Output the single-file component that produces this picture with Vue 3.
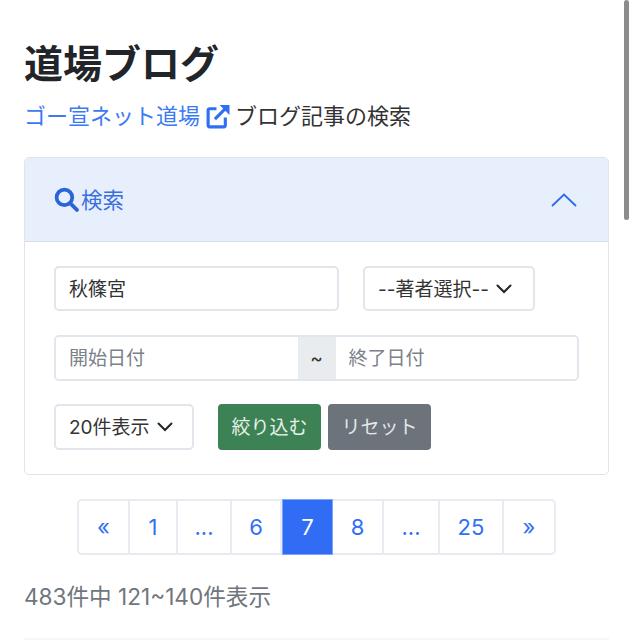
<script setup>
const pages = [
  { label: '«', w: 51 },
  { label: '1', w: 48 },
  { label: '...', w: 54 },
  { label: '6', w: 50 },
  { label: '7', w: 51, active: true },
  { label: '8', w: 51 },
  { label: '...', w: 56 },
  { label: '25', w: 64 },
  { label: '»', w: 50 }
]
</script>

<template>
  <div class="page">
    <h1 class="title">道場ブログ</h1>
    <p class="lead">
      <a class="link">ゴー宣ネット道場</a>
      <svg class="ext" viewBox="0 0 24 24" width="25" height="25" fill="none" stroke="#2f6ff2" stroke-width="3">
        <path d="M11 4.500H4.500A1.500 1.500 0 0 0 3 6v14.500A1.500 1.500 0 0 0 4.500 22H18a1.500 1.500 0 0 0 1.500-1.500V13" />
        <path d="M9.500 14.500 20 4" />
        <path d="M14 1h9.500v9.500z" fill="#2f6ff2" stroke="none" />
      </svg>
      <span>ブログ記事の検索</span>
    </p>

    <section class="card">
      <header class="card-head">
        <div class="head-left">
          <svg viewBox="0 0 24 24" width="25" height="25" fill="none" stroke="#2b63d9" stroke-width="3.600" stroke-linecap="round">
            <circle cx="10" cy="10" r="7.500" />
            <path d="M15.500 15.500 22 22" />
          </svg>
          <span class="head-text">検索</span>
        </div>
        <svg class="chev-up" viewBox="0 0 26 14" width="26" height="14" fill="none" stroke="#2f6ae6" stroke-width="1.800">
          <path d="M1 13 13 1.500 25 13" />
        </svg>
      </header>

      <div class="card-body">
        <div class="row">
          <input class="field name" value="秋篠宮" />
          <div class="field select author">
            <span class="label">--著者選択--</span>
            <svg viewBox="0 0 16 10" width="16" height="10" fill="none" stroke="#212529" stroke-width="2" stroke-linecap="round">
              <path d="M1.500 1.500 8 8l6.500-6.500" />
            </svg>
          </div>
        </div>

        <div class="dates">
          <input class="date" placeholder="開始日付" />
          <div class="addon">~</div>
          <input class="date" placeholder="終了日付" />
        </div>

        <div class="row actions">
          <div class="field select count">
            <span class="label">20件表示</span>
            <svg viewBox="0 0 16 10" width="16" height="10" fill="none" stroke="#212529" stroke-width="2" stroke-linecap="round">
              <path d="M1.500 1.500 8 8l6.500-6.500" />
            </svg>
          </div>
          <button class="btn green">絞り込む</button>
          <button class="btn gray">リセット</button>
        </div>
      </div>
    </section>

    <nav class="pager">
      <a
        v-for="(p, i) in pages"
        :key="i"
        class="cell"
        :class="{ active: p.active }"
        :style="{ width: p.w + 'px' }"
      >{{ p.label }}</a>
    </nav>

    <p class="summary">483件中 121~140件表示</p>
    <div class="rule"></div>
    <div class="scrollbar"></div>
  </div>
</template>

<style scoped>
.page {
  position: relative;
  box-sizing: border-box;
  width: 632px;
  height: 640px;
  overflow: hidden;
  padding: 41px 23px 0 24px;
  background: #fff;
  color: #212529;
  font-family: Inter, "Noto Sans CJK JP", sans-serif;
  font-size: 22px;
}
.title {
  margin: 0;
  font-size: 39px;
  line-height: 46px;
  font-weight: 700;
}
.lead {
  margin: 15px 0 0;
  height: 28px;
  display: flex;
  align-items: center;
  line-height: 28px;
  font-size: 22px;
  color: #333;
}
.link { color: #3b7af5; }
.ext { margin: 0 5px 0 5px; flex: none; }
.card {
  box-sizing: border-box;
  margin-top: 27px;
  height: 318px;
  border: 1.500px solid #dfe3ea;
  border-radius: 5px;
  overflow: hidden;
}
.card-head {
  box-sizing: border-box;
  height: 84px;
  background: #e7effd;
  border-bottom: 1.500px solid #d6ddea;
  display: flex;
  align-items: center;
  justify-content: space-between;
  padding: 0 31px 0 29px;
  color: #3a70dd;
}
.head-left {
  display: flex;
  align-items: center;
  gap: 2px;
}
.head-text {
  font-size: 21.500px;
  padding-bottom: 2px;
}
.card-body {
  padding: 24px 29px 0 29px;
  display: flex;
  flex-direction: column;
}
.row {
  display: flex;
  align-items: center;
  gap: 24px;
}
.field {
  box-sizing: border-box;
  height: 45px;
  padding: 0 13px 3px;
  border: 2px solid #e2e5ec;
  border-radius: 5px;
  background: #fff;
  color: #333;
  font: inherit;
  font-size: 19px;
  outline: none;
}
.name { width: 285px; }
.select {
  display: flex;
  align-items: center;
  gap: 7px;
}
.select svg { flex: none; margin-top: 3px; }
.label { white-space: nowrap; }
.author { width: 172px; }
.dates {
  box-sizing: border-box;
  display: flex;
  width: 525px;
  height: 46px;
  margin-top: 24px;
  border: 2px solid #e2e5ec;
  border-radius: 5px;
  overflow: hidden;
}
.date {
  box-sizing: border-box;
  flex: 1;
  min-width: 0;
  padding: 0 13px;
  border: 0;
  outline: none;
  font: inherit;
  font-size: 19px;
}
.date::placeholder { color: #7b8188; opacity: 1; }
.addon {
  width: 38px;
  flex: none;
  display: flex;
  align-items: center;
  justify-content: center;
  background: #e9ecef;
  font-size: 19px;
  color: #333;
}
.actions {
  margin-top: 23px;
  gap: 0;
}
.count {
  width: 140px;
  height: 46px;
  margin-right: 24px;
}
.btn {
  box-sizing: border-box;
  width: 103px;
  height: 46px;
  padding: 0 0 3px;
  border: 1px solid transparent;
  border-radius: 4px;
  color: #fff;
  font: inherit;
  font-size: 19px;
}
.green { background: #3d8254; color: #e6f2e9; margin-right: 7px; }
.gray { background: #6c737b; color: #e4e6e8; }
.pager {
  box-sizing: border-box;
  margin: 24px auto 0;
  display: flex;
  width: 479px;
  height: 56px;
  border: 2px solid #e8ebf1;
  border-radius: 5px;
}
.cell {
  box-sizing: border-box;
  flex: none;
  display: flex;
  align-items: center;
  justify-content: center;
  border-right: 2px solid #e8ebf1;
  color: #3270f2;
  font-size: 22px;
}
.cell:last-child { border-right: 0; }
.cell.active {
  margin: -2px 0;
  height: 56px;
  background: #316cf4;
  border: 1px solid #7ea6f8;
  color: #fff;
}
.summary {
  margin: 26px 0 0;
  line-height: 32px;
  font-size: 22.600px;
  color: #6f767d;
}
.rule {
  height: 2px;
  margin-top: 25px;
  background: #f5f6f7;
}
.scrollbar {
  position: absolute;
  top: 0;
  left: 624px;
  width: 5px;
  height: 220px;
  border-radius: 3px;
  background: #8c8c8c;
}
</style>
